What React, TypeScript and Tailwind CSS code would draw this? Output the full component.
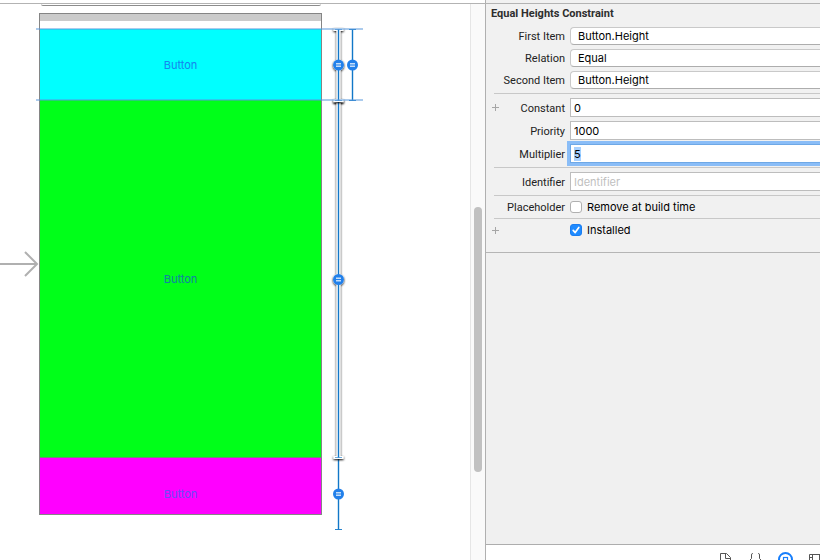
import { useState } from "react";
import type { ReactNode } from "react";

function Separator() {
  return <div className="ml-2 h-px bg-[#c8c8c8]" />;
}

interface RowProps {
  label?: string;
  htmlFor?: string;
  addable?: boolean;
  children: ReactNode;
}

function Row({ label, htmlFor, addable, children }: RowProps) {
  return (
    <div className="grid grid-cols-[14px_65px_1fr] items-center">
      <div className="flex pl-[5px]">
        {addable && (
          <button type="button" aria-label="Add variation" className="text-[#a6a6a6]">
            <svg width="9" height="9" viewBox="0 0 9 9" stroke="currentColor">
              <path d="M4.5 1v7M1 4.5h7" />
            </svg>
          </button>
        )}
      </div>
      <label
        htmlFor={htmlFor}
        className="pt-0.5 text-right font-['Roboto','Liberation_Sans',sans-serif] text-[11px] leading-3 whitespace-nowrap text-[#222]"
      >
        {label}
      </label>
      <div className="flex min-w-0 items-center pl-[5px]">{children}</div>
    </div>
  );
}

function Popup({ id, options }: { id: string; options: string[] }) {
  return (
    <select
      id={id}
      className="h-[18px] min-w-0 flex-1 appearance-none rounded-l-[4px] border border-r-0 border-[#c9c9c9] border-b-[#adadad] bg-white pl-[7px] text-[11px] leading-4 text-black outline-none"
    >
      {options.map((option) => (
        <option key={option}>{option}</option>
      ))}
    </select>
  );
}

interface FieldProps {
  id: string;
  initial?: string;
  placeholder?: string;
}

function Field({ id, initial = "", placeholder }: FieldProps) {
  const [value, setValue] = useState(initial);
  return (
    <input
      id={id}
      type="text"
      value={value}
      placeholder={placeholder}
      onChange={(e) => setValue(e.target.value)}
      onFocus={(e) => e.target.select()}
      autoFocus={id === "multiplier"}
      className="h-[19px] min-w-0 flex-1 border border-r-0 border-[#bdbdbd] bg-white px-[3px] text-[11px] leading-4 text-black outline-none selection:bg-[#a8d1ff] selection:text-black placeholder:text-[#bfbfbf] focus:border-[#6ea8e6] focus:ring-3 focus:ring-[#8abdf7]"
    />
  );
}

function Check({ id, label, on }: { id: string; label: string; on?: boolean }) {
  return (
    <label htmlFor={id} className="flex h-[14px] items-center gap-[5px] text-[11px] leading-3 text-black">
      <span className="relative flex">
        <input
          id={id}
          type="checkbox"
          defaultChecked={on}
          className="peer h-3 w-3 appearance-none rounded-[3px] border border-[#b0b0b0] bg-white checked:border-[#1a7df0] checked:bg-[#1f8bff]"
        />
        <svg
          viewBox="0 0 12 12"
          className="pointer-events-none absolute inset-0 hidden h-3 w-3 peer-checked:block"
          fill="none"
          stroke="white"
          strokeWidth="1.7"
          strokeLinecap="round"
          strokeLinejoin="round"
        >
          <path d="M3.2 6.4 5.2 8.6 8.8 3.4" />
        </svg>
      </span>
      {label}
    </label>
  );
}

function Inspector() {
  return (
    <aside className="flex w-[335px] shrink-0 flex-col overflow-hidden border-l border-[#b0b0b0] bg-[#f1f1f1]">
      <form className="flex flex-col gap-1 border-b border-[#b5b5b5] pb-[15px]">
        <h2 className="pl-[5px] font-['Roboto','Liberation_Sans',sans-serif] text-[11px] leading-[19px] font-bold text-[#2e2e2e]">
          Equal Heights Constraint
        </h2>
        <Row label="First Item" htmlFor="first">
          <Popup id="first" options={["Button.Height"]} />
        </Row>
        <Row label="Relation" htmlFor="relation">
          <Popup id="relation" options={["Equal", "Less Than or Equal", "Greater Than or Equal"]} />
        </Row>
        <Row label="Second Item" htmlFor="second">
          <Popup id="second" options={["Button.Height"]} />
        </Row>
        <Separator />
        <Row label="Constant" htmlFor="constant" addable>
          <Field id="constant" initial="0" />
        </Row>
        <Row label="Priority" htmlFor="priority">
          <Field id="priority" initial="1000" />
        </Row>
        <Row label="Multiplier" htmlFor="multiplier">
          <Field id="multiplier" initial="5" />
        </Row>
        <Separator />
        <Row label="Identifier" htmlFor="identifier">
          <Field id="identifier" placeholder="Identifier" />
        </Row>
        <Separator />
        <Row label="Placeholder" htmlFor="placeholder">
          <Check id="placeholder" label="Remove at build time" />
        </Row>
        <Separator />
        <Row addable>
          <Check id="installed" label="Installed" on />
        </Row>
      </form>
      <div className="flex-1 bg-[#f0f0f0]" />
      <LibraryTabs />
    </aside>
  );
}

function LibraryTabs() {
  return (
    <nav className="flex h-4 items-start justify-end gap-[14px] overflow-hidden border-t border-[#adadad] bg-white pt-[7px]">
      <button type="button" aria-label="File templates" className="w-4">
        <svg width="16" height="16" viewBox="0 0 16 16" fill="none" stroke="#555">
          <path d="M2.5 14.5V1.5h6l4 4v9zM7.5 1.5v5h5" />
        </svg>
      </button>
      <button type="button" aria-label="Code snippets" className="w-4">
        <svg width="16" height="16" viewBox="0 0 16 16" fill="none" stroke="#555">
          <path d="M5 1.5H4.5Q3.5 1.5 3.5 3v3.5L2 8 3.5 9.5V13q0 1.5 1 1.5H5M10 1.5h.5Q11.5 1.5 11.5 3v3.5L13 8 11.5 9.5V13q0 1.5-1 1.5H10" />
        </svg>
      </button>
      <button type="button" aria-label="Objects" className="w-4">
        <svg width="16" height="16" viewBox="0 0 16 16" fill="none" stroke="#177efb">
          <circle cx="7.5" cy="7.5" r="6.5" strokeWidth="2" />
          <rect x="5.5" y="5.5" width="4" height="4" strokeWidth="1.2" />
        </svg>
      </button>
      <button type="button" aria-label="Media" className="-mr-1 w-4">
        <svg width="16" height="16" viewBox="0 0 16 16" fill="none" stroke="#555">
          <path d="M1.5 2.5h13v11h-13zM4.5 2.5v11M11.5 2.5v11M1.5 5.5h3M1.5 8.5h3M11.5 5.5h3M11.5 8.5h3" />
        </svg>
      </button>
    </nav>
  );
}

function Badge({ x, y }: { x: number; y: number }) {
  return (
    <g>
      <circle cx={x} cy={y} r="5.5" fill="#2280ea" />
      <path d={`M${x - 2.5} ${y - 1.2}h5M${x - 2.5} ${y + 1.2}h5`} stroke="#c4ddfa" strokeWidth="1.4" />
    </g>
  );
}

// Vertical extent of a height constraint, capped at both ends.
function Span({ x, top, bottom, selected }: { x: number; top: number; bottom: number; selected?: boolean }) {
  const caps = `M${x - 3.5} ${top}h7M${x - 3.5} ${bottom}h7`;
  const stem = `M${x} ${top}V${bottom}`;
  const mid = (top + bottom) / 2;
  return (
    <g>
      {selected && (
        <g filter="url(#glow)">
          <path d={stem} stroke="white" strokeWidth="4" />
          <path d={caps} stroke="white" strokeWidth="3" strokeLinecap="square" />
          <circle cx={x} cy={mid} r="5.5" fill="white" />
        </g>
      )}
      <path d={stem} stroke="#1277c8" strokeWidth="1.4" />
      <path d={caps} stroke="#1277c8" strokeOpacity={selected ? 0.6 : 0.9} />
      <Badge x={x} y={mid} />
    </g>
  );
}

function Constraints() {
  return (
    <svg className="pointer-events-none absolute top-0 left-0" width="400" height="556" viewBox="0 4 400 556" fill="none">
      <defs>
        <filter id="glow" filterUnits="userSpaceOnUse" x="320" y="10" width="40" height="470">
          <feDropShadow dx="0" dy="1" stdDeviation="1.3" floodColor="#000" floodOpacity="1" />
        </filter>
      </defs>
      <path d="M0 264h36M25 252l12 12-12 12" stroke="#b0b0b0" strokeWidth="2" />
      <Span x={352.5} top={29.5} bottom={100.5} />
      <Span x={338.5} top={458.5} bottom={529.5} />
      <Span x={338.5} top={101.5} bottom={457.5} selected />
      <Span x={338.5} top={29.5} bottom={100.5} selected />
      <path d="M36 29h327M36 100h327" stroke="#5798dc" strokeOpacity="0.5" strokeWidth="2" />
    </svg>
  );
}

const buttonText = "w-full text-[11px] leading-4";

function Canvas() {
  return (
    <main className="relative min-w-0 flex-1 overflow-hidden bg-white">
      <div className="ml-[41px] h-[2px] w-[280px] rounded-b-sm border-b border-[#8c8c8c]" />
      <div className="mt-[7px] ml-[39px] w-[283px] border border-[#858585]">
        <div className="h-[7px] bg-[#cbcbcb]" />
        <div className="h-2 bg-white" />
        <div className="flex h-[71px] items-center bg-[#00ffff]">
          <button type="button" className={`${buttonText} text-[#1584ee]`}>Button</button>
        </div>
        <div className="flex h-[358px] items-center border-b border-[#6f8f6f] bg-[#00ff19]">
          <button type="button" className={`${buttonText} text-[#1182a4]`}>Button</button>
        </div>
        <div className="flex h-14 items-end bg-[#ff00ff] pb-3">
          <button type="button" className={`${buttonText} text-[#6a4cf8]`}>Button</button>
        </div>
      </div>
      <Constraints />
    </main>
  );
}

export default function App() {
  return (
    <div className="flex h-screen flex-col overflow-hidden bg-white font-['Inter','Liberation_Sans',sans-serif]">
      <header className="flex h-1 shrink-0 border-b border-[#b3b3b3]">
        <div className="flex-1 bg-white" />
        <div className="w-[335px] border-l border-[#b0b0b0] bg-[#f1f1f1]" />
      </header>
      <div className="flex min-h-0 flex-1">
        <Canvas />
        <div className="flex w-[15px] shrink-0 flex-col items-center border-l border-[#e6e6e6] bg-[#fafafa] pt-[203px]">
          <div className="h-[265px] w-2 rounded-full bg-[#c1c1c1]" />
        </div>
        <Inspector />
      </div>
    </div>
  );
}
